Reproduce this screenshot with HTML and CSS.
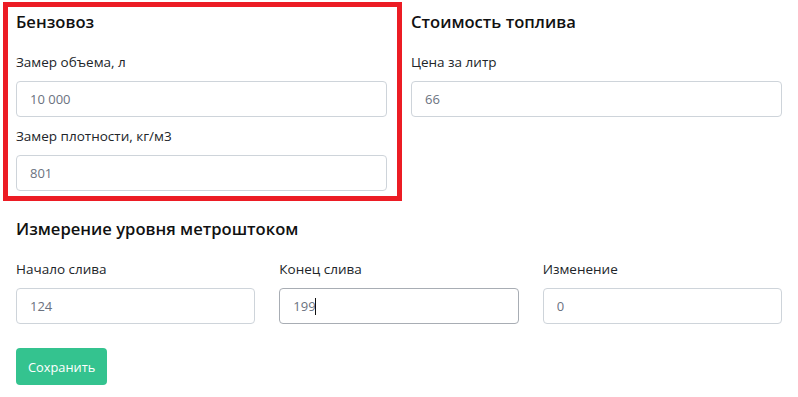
FILE: index.html
```html
<!DOCTYPE html>
<html lang="ru">
<head>
  <meta charset="UTF-8">
  <title>Слив топлива</title>
  <link rel="stylesheet" href="styles.css">
</head>
<body>
  <div class="page">
    <div class="top-row">
      <div class="section">
        <h2>Бензовоз</h2>
        <div class="field">
          <label for="volume">Замер объема, л</label>
          <input type="text" id="volume" value="10 000">
        </div>
        <div class="field">
          <label for="density">Замер плотности, кг/м3</label>
          <input type="text" id="density" value="801">
        </div>
      </div>

      <div class="section">
        <h2>Стоимость топлива</h2>
        <div class="field">
          <label for="price">Цена за литр</label>
          <input type="text" id="price" value="66">
        </div>
      </div>

      <!-- highlight frame around the first block -->
      <div class="highlight"></div>
    </div>

    <div class="section">
      <h2>Измерение уровня метроштоком</h2>
      <div class="three-cols">
        <div class="field">
          <label for="start">Начало слива</label>
          <input type="text" id="start" value="124">
        </div>
        <div class="field">
          <label for="end">Конец слива</label>
          <div class="input-wrap">
            <input type="text" id="end" class="is-focused" value="199">
            <span class="caret"></span>
          </div>
        </div>
        <div class="field">
          <label for="diff">Изменение</label>
          <input type="text" id="diff" value="0">
        </div>
      </div>
    </div>

    <button type="button" class="btn-save">Сохранить</button>
  </div>
</body>
</html>
```

FILE: styles.css
```css
body {
  margin: 0;
  font-family: "Open Sans", "Noto Sans", sans-serif;
  color: #212529;
  background: #fff;
}

.page {
  padding: 10px 16px 0;
}

.top-row {
  display: grid;
  grid-template-columns: 1fr 1fr;
  gap: 24px;
  position: relative;
}

.section h2 {
  margin: 0 0 18px;
  font-size: 16.6px;
  line-height: 24px;
  font-weight: 600;
  color: #111;
}

.field {
  margin-bottom: 9px;
}

.field label {
  display: block;
  font-size: 13.5px;
  line-height: 20px;
  margin-bottom: 9px;
  color: #212529;
}

.field input {
  display: block;
  width: 100%;
  height: 36px;
  box-sizing: border-box;
  padding: 0 13px;
  border: 1px solid #ced4da;
  border-radius: 4px;
  font-family: inherit;
  font-size: 13px;
  color: #6b7280;
  background: #fff;
  outline: none;
}

.field input.is-focused {
  border-color: #a8adb4;
}

.input-wrap {
  position: relative;
}

.caret {
  position: absolute;
  left: 36px;
  top: 10px;
  width: 1px;
  height: 17px;
  background: #111;
}

.highlight {
  position: absolute;
  left: -13px;
  top: -8px;
  width: 389px;
  height: 189px;
  border: 5px solid #ec1c24;
  pointer-events: none;
}

.top-row + .section {
  margin-top: 17px;
}

.three-cols {
  display: grid;
  grid-template-columns: 1fr 1fr 1fr;
  gap: 24px;
}

.btn-save {
  margin-top: 15px;
  height: 37px;
  padding: 0 12px;
  border: none;
  border-radius: 4px;
  background: #34c38f;
  color: #fff;
  font-family: inherit;
  font-size: 12.8px;
  cursor: pointer;
}
```
